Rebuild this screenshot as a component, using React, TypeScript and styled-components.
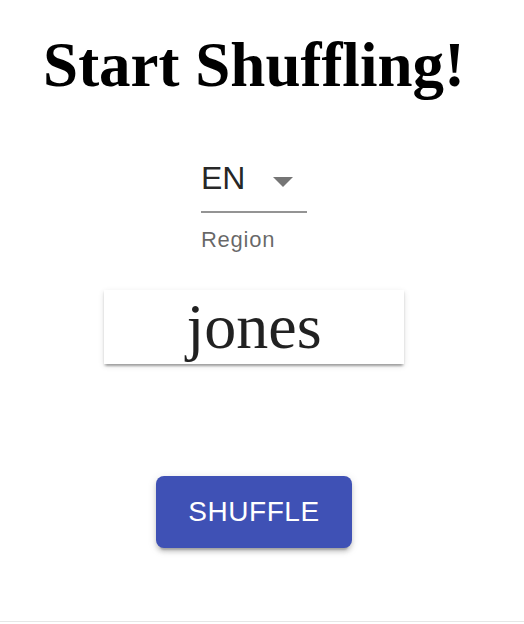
import React from "react";
import styled, { createGlobalStyle } from "styled-components";

const GlobalStyle = createGlobalStyle`
  html, body {
    margin: 0;
    padding: 0;
    background: #ffffff;
  }
`;

const Page = styled.main`
  box-sizing: border-box;
  min-height: 622px;
  border-bottom: 1px solid #e6e6e6;
  display: flex;
  flex-direction: column;
  align-items: center;
  padding: 29px 16px 0 0;
`;

const Title = styled.h1`
  margin: 0;
  font-family: "Liberation Serif", "Times New Roman", serif;
  font-weight: 700;
  font-size: 63px;
  line-height: 72px;
  color: #000;
`;

const FormControl = styled.div`
  display: flex;
  flex-direction: column;
  width: 106px;
  margin-top: 46px;
  font-family: "Liberation Sans", Helvetica, Arial, sans-serif;
`;

const SelectBox = styled.div`
  display: flex;
  align-items: flex-start;
  justify-content: space-between;
  padding: 8px 0 10px;
  border-bottom: 2px solid rgba(0, 0, 0, 0.42);
  cursor: pointer;
`;

const SelectValue = styled.span`
  font-size: 32px;
  line-height: 46px;
  color: rgba(0, 0, 0, 0.87);
`;

const Arrow = styled.svg`
  width: 20px;
  height: 10px;
  margin: 22px 14px 0 0;
  fill: rgba(0, 0, 0, 0.54);
`;

const HelperText = styled.p`
  margin: 9px 0 0;
  font-size: 22px;
  line-height: 36.5px;
  letter-spacing: 0.0333em;
  color: rgba(0, 0, 0, 0.6);
`;

const NameCard = styled.div`
  box-sizing: border-box;
  width: 300px;
  height: 74px;
  margin-top: 31.5px;
  background: #fff;
  box-shadow: 0px 4px 2px -2px rgba(0, 0, 0, 0.2),
    0px 2px 2px 0px rgba(0, 0, 0, 0.14), 0px 2px 6px 0px rgba(0, 0, 0, 0.12);
  text-align: center;
  font-family: "Liberation Serif", "Times New Roman", serif;
  font-size: 64px;
  line-height: 74px;
  color: rgba(0, 0, 0, 0.87);
`;

const ShuffleButton = styled.button`
  margin-top: 112px;
  border: none;
  border-radius: 8px;
  padding: 12px 32px;
  background: #3f51b5;
  color: #fff;
  font-family: "Liberation Sans", Helvetica, Arial, sans-serif;
  font-weight: 500;
  font-size: 28px;
  line-height: 48px;
  letter-spacing: 0.02em;
  text-transform: uppercase;
  cursor: pointer;
  box-shadow: 0px 6px 2px -4px rgba(0, 0, 0, 0.2),
    0px 4px 4px 0px rgba(0, 0, 0, 0.14), 0px 2px 10px 0px rgba(0, 0, 0, 0.12);
`;

export default function App() {
  return (
    <>
      <GlobalStyle />
      <Page>
        <Title>Start Shuffling!</Title>
        <FormControl>
          <SelectBox role="button" aria-haspopup="listbox">
            <SelectValue>EN</SelectValue>
            <Arrow viewBox="0 0 20 10" aria-hidden="true">
              <path d="M0 0 L10 10 L20 0 Z" />
            </Arrow>
          </SelectBox>
          <HelperText>Region</HelperText>
        </FormControl>
        <NameCard>jones</NameCard>
        <ShuffleButton>Shuffle</ShuffleButton>
      </Page>
    </>
  );
}
